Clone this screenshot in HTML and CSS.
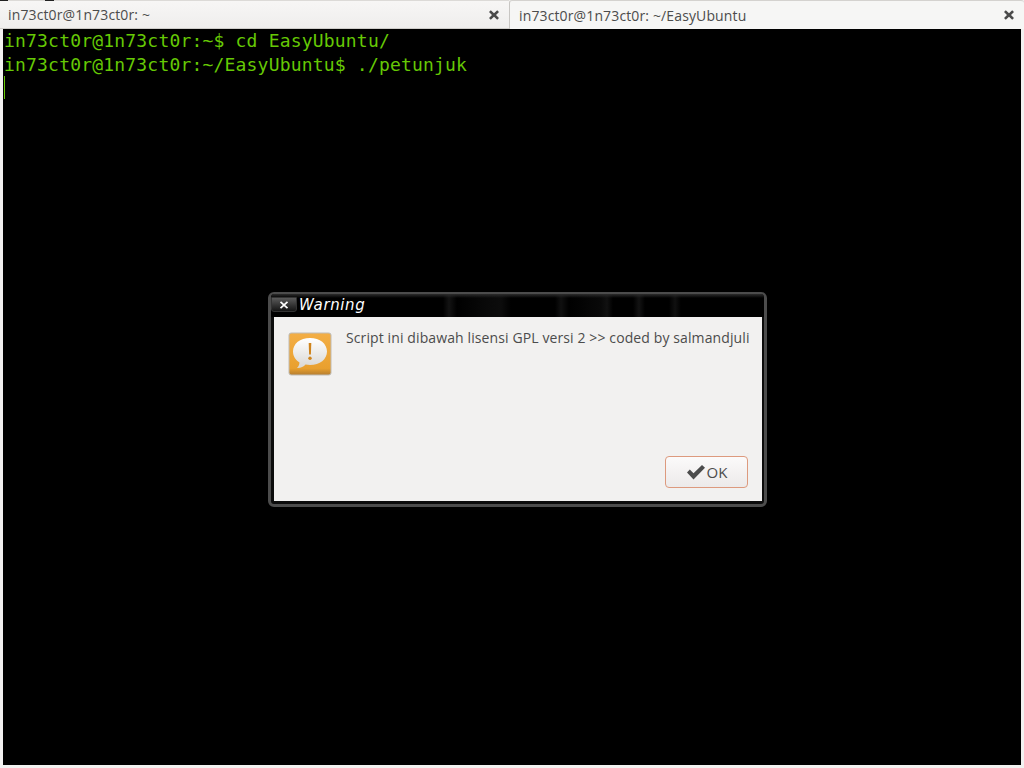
FILE: index.html
```html
<!DOCTYPE html>
<html lang="id">
<head>
<meta charset="utf-8">
<title>Terminal</title>
<link rel="stylesheet" href="styles.css">
</head>
<body>
<div class="window">
  <div class="tabs">
    <div class="tab tab-back">
      <span class="tab-label">in73ct0r@1n73ct0r: ~</span>
      <svg class="tab-close" viewBox="0 0 12 12"><path d="M2.8 1.2 6 4.2l3.2-3 1.8 1.7L8 6l3 3.1-1.8 1.7L6 7.8l-3.2 3L1 9.1 4 6 1 2.9z"/></svg>
    </div>
    <div class="tab tab-active">
      <span class="tab-label">in73ct0r@1n73ct0r: ~/EasyUbuntu</span>
      <svg class="tab-close" viewBox="0 0 12 12"><path d="M2.8 1.2 6 4.2l3.2-3 1.8 1.7L8 6l3 3.1-1.8 1.7L6 7.8l-3.2 3L1 9.1 4 6 1 2.9z"/></svg>
    </div>
  </div>
  <div class="terminal">
    <div class="line">in73ct0r@1n73ct0r:~$ cd EasyUbuntu/</div>
    <div class="line">in73ct0r@1n73ct0r:~/EasyUbuntu$ ./petunjuk</div>
    <div class="cursor"></div>
  </div>
</div>
<div class="speck speck-a"></div>
<div class="speck speck-b"></div>
<div class="dialog">
  <div class="titlebar">
    <div class="close-btn">
      <svg viewBox="0 0 10 8" class="close-x"><path d="M1.500 .8l7 6.400M8.500 .8l-7 6.400"/></svg>
    </div>
    <span class="dialog-title">Warning</span>
  </div>
  <div class="dialog-body">
    <div class="message-row">
      <svg class="warn-icon" viewBox="0 0 44 44">
        <defs>
          <linearGradient id="orange" x1="0" y1="0" x2="0" y2="1">
            <stop offset="0" stop-color="#f3ae45"/>
            <stop offset="0.85" stop-color="#e9a02e"/>
            <stop offset="1" stop-color="#b98030"/>
          </linearGradient>
          <linearGradient id="bubble" x1="0" y1="0" x2="0" y2="1">
            <stop offset="0" stop-color="#ffffff"/>
            <stop offset="1" stop-color="#d9d7d3"/>
          </linearGradient>
        </defs>
        <rect x="0.5" y="0.5" width="43" height="43" rx="3" fill="#c0bcb4"/>
        <rect x="1.500" y="1.500" width="41" height="41" rx="2" fill="url(#orange)"/>
        <path d="M22 6c10 0 17 5.800 17 13.500S32 33 22 33c-1.600 0-3.100-.2-4.500-.5-1.800 2.400-5 3.700-8.500 3.500 1.300-1.100 2.300-3 2.500-5.500C7.800 28.300 5 24.200 5 19.500 5 11.800 12 6 22 6z" fill="url(#bubble)"/>
        <path d="M20.700 11h2.600l-.4 11.500h-1.800z" fill="#cf841c"/>
        <circle cx="22" cy="26.300" r="1.700" fill="#cf841c"/>
      </svg>
      <div class="message">Script ini dibawah lisensi GPL versi 2 &gt;&gt; coded by salmandjuli</div>
    </div>
    <div class="actions">
      <button class="ok-btn">
        <svg class="check" viewBox="0 0 20 16"><path d="M1 8.500 3.800 5.500 7.500 9.200 16 1l3 2.800L7.500 15.500z"/></svg>
        <span class="ok-label">OK</span>
      </button>
    </div>
  </div>
</div>
</body>
</html>
```

FILE: styles.css
```css
html, body {
  margin: 0;
  height: 100%;
  overflow: hidden;
  background: #f2f1f0;
}

.window {
  display: flex;
  flex-direction: column;
  height: 768px;
  padding-bottom: 3px;
  box-sizing: border-box;
}

.speck {
  position: absolute;
  top: 0;
  height: 1px;
  background: #222;
}

.speck-a {
  left: 0;
  width: 8px;
}

.speck-b {
  left: 45px;
  width: 9px;
}

.tabs {
  display: flex;
  height: 29px;
  font-family: "Open Sans", "Noto Sans", sans-serif;
  font-size: 14px;
  letter-spacing: .13px;
  color: #4c4c4c;
}

.tab {
  display: flex;
  align-items: center;
  justify-content: space-between;
  box-sizing: border-box;
  height: 29px;
}

.tab-back {
  width: 509px;
  padding: 0 9px 0 8px;
  background: linear-gradient(#f7f6f5, #efeeed);
  border-top: 1px solid #dcdad7;
  border-bottom: 1px solid #cfcdca;
}

.tab-active {
  width: 515px;
  padding: 0 9px 0 9px;
  background: #f6f6f5;
  border-left: 1px solid #c8c6c3;
  border-top: 1px solid #d4d2cf;
  border-radius: 3px 3px 0 0;
}

.tab-label {
  white-space: pre;
}

.tab-close {
  width: 12px;
  height: 12px;
  fill: #4a4a4a;
}

.terminal {
  flex: 1;
  margin: 0 3px;
  padding: 0 1px;
  background: #000;
  color: #66c905;
  font-family: "DejaVu Sans Mono", monospace;
  font-size: 18px;
  letter-spacing: .19px;
  line-height: 23.500px;
}

.line {
  white-space: pre;
  height: 23.500px;
}

.cursor {
  width: 1px;
  height: 23px;
  background: #66c905;
}

.dialog {
  position: absolute;
  left: 268px;
  top: 292px;
  width: 499px;
  height: 215px;
  box-sizing: border-box;
  display: flex;
  flex-direction: column;
  background: #0c0c0c;
  border-style: solid;
  border-color: #4c4c4c;
  border-width: 2px 3px 3px 3px;
  border-radius: 6px;
  padding: 0 2px 3px 3px;
}

.titlebar {
  display: flex;
  align-items: center;
  height: 23px;
  flex: none;
  background:
    linear-gradient(#2c2c2c, transparent 4px),
    linear-gradient(90deg,
      #000 172px, #131313 178px, #000 186px,
      #080808 212px, #0c0c0c 230px, #000 240px,
      #000 284px, #101010 290px, #000 298px,
      #090909 330px, #111 336px, #000 342px,
      #000 362px, #131313 368px, #000 374px,
      #000 398px, #101010 404px, #000 410px);
  margin: 0 -2px 0 -3px;
  border-radius: 3px 3px 0 0;
}

.close-btn {
  display: flex;
  align-items: center;
  justify-content: center;
  width: 26px;
  height: 15px;
  margin: -2px 2px 0 0;
  box-sizing: border-box;
  border: 1px solid #333;
  border-radius: 0 0 3px 3px;
  background: linear-gradient(#5a5a5a, #151515);
}

.close-x {
  width: 10px;
  height: 8px;
  stroke: #fff;
  stroke-width: 1.700;
  fill: none;
}

.dialog-title {
  font-family: "DejaVu Sans", sans-serif;
  font-style: italic;
  font-size: 15px;
  letter-spacing: .6px;
  color: #fff;
  margin-top: -2px;
}

.dialog-body {
  flex: 1;
  display: flex;
  flex-direction: column;
  justify-content: space-between;
  background: #f2f1f0;
  padding: 14px 14px 13px 14px;
}

.message-row {
  display: flex;
  gap: 14px;
}

.warn-icon {
  width: 44px;
  height: 44px;
  flex: none;
  margin-top: 1px;
}

.message {
  font-family: "Open Sans", "Noto Sans", sans-serif;
  font-size: 14px;
  letter-spacing: .11px;
  color: #4c4c4c;
  line-height: 14px;
  white-space: nowrap;
}

.actions {
  display: flex;
  justify-content: flex-end;
}

.ok-btn {
  display: flex;
  align-items: center;
  justify-content: center;
  gap: 1px;
  width: 83px;
  height: 32px;
  padding: 0;
  border: 1px solid #dd9a7e;
  border-radius: 4px;
  background: linear-gradient(#fbfafa, #eceaea);
  font-family: "Open Sans", "Noto Sans", sans-serif;
  font-size: 15px;
  color: #4c4c4c;
}

.check {
  width: 20px;
  height: 16px;
  fill: #4c4c4c;
}
```
